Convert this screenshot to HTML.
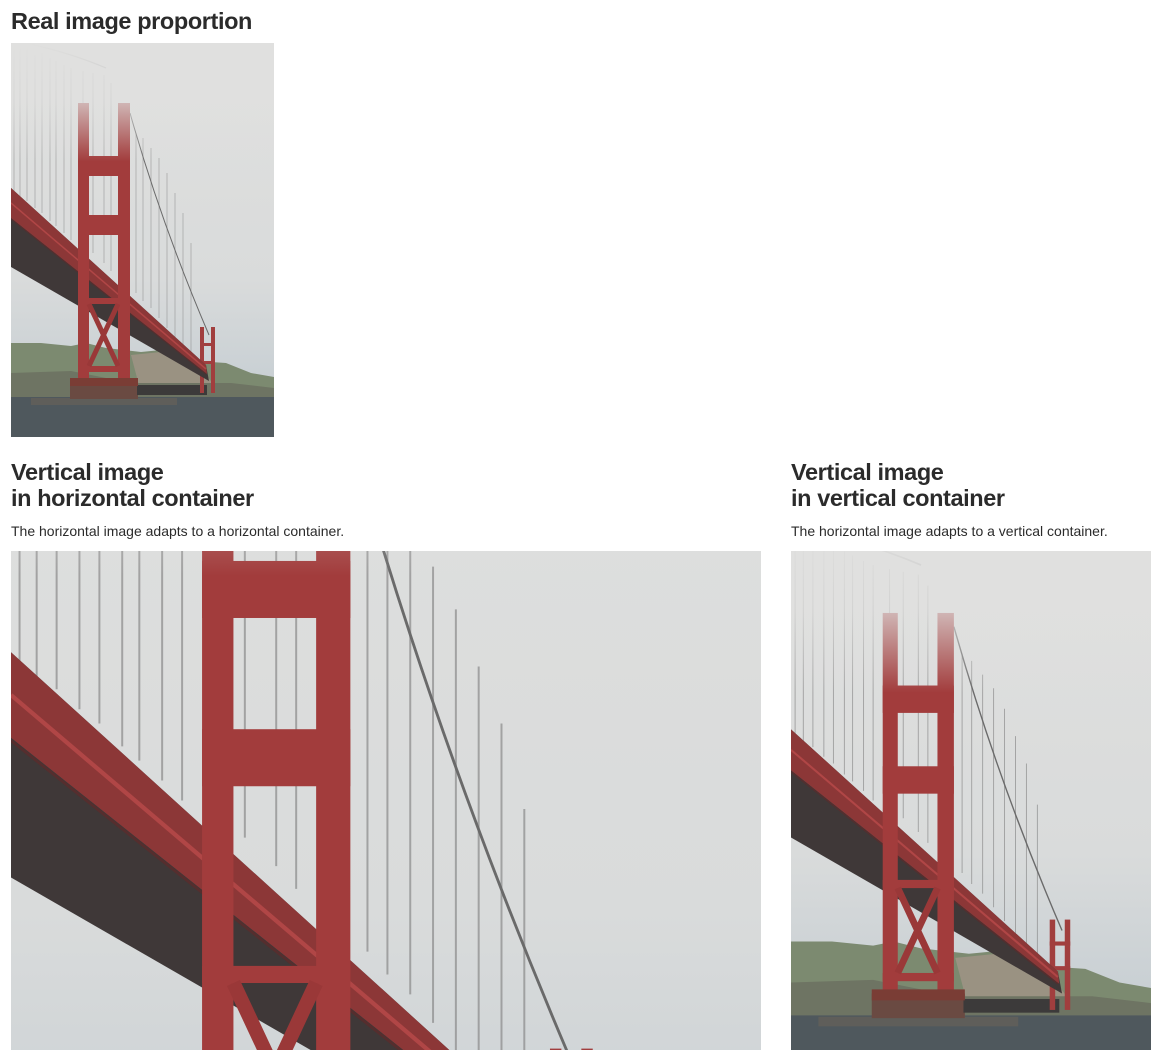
<!DOCTYPE html>
<html><head><meta charset="utf-8"><style>
html,body{margin:0;padding:0}
body{background:#fff;font-family:"Liberation Sans",Arial,sans-serif;color:#2b2b2b;width:1162px;height:1061px;overflow:hidden;position:relative}
h2{position:absolute;margin:0;font-size:23.5px;font-weight:bold;line-height:26px;letter-spacing:-0.4px}
p{position:absolute;margin:0;font-size:14px;line-height:16px}
svg.im{position:absolute;display:block}
</style></head><body>
<h2 style="left:11px;top:8px">Real image proportion</h2>
<svg class="im" style="left:11px;top:43px" width="263" height="394" viewBox="0 0 263 394" preserveAspectRatio="none">
<defs>
<linearGradient id="sky" x1="0" y1="0" x2="0" y2="1"><stop offset="0" stop-color="#e0e0df"/><stop offset="0.6" stop-color="#d9dbdb"/><stop offset="0.85" stop-color="#c9d0d4"/></linearGradient>
<linearGradient id="fog" x1="0" y1="0" x2="0" y2="1"><stop offset="0" stop-color="#e0e0df" stop-opacity="1"/><stop offset="0.15" stop-color="#e0e0df" stop-opacity="0.75"/><stop offset="0.3" stop-color="#e0e0df" stop-opacity="0"/></linearGradient>
<g id="B">
<rect width="263" height="394" fill="url(#sky)"/>
<g stroke="#8a8a8a" stroke-width="0.7" opacity="0.7">
<path d="M3 0V150M9 5V155M16 2V158M24 12V165M31 10V170M39 15V178M45 18V183M53 22V190M60 25V197M72 28V200M82 30V210M93 32V220M100 40V228M125 90V250M132 95V258M140 105V265M148 115V275M156 130V285M164 150V295M172 170V305M180 200V315"/>
</g>
<path d="M15 0 Q60 10 95 25" stroke="#777" stroke-width="1.2" fill="none"/>
<path d="M119 70 Q150 180 198 292" stroke="#6a6a6a" stroke-width="1" fill="none"/>
<path d="M0 300 L30 300 L60 303 L75 300 L95 305 L130 309 L160 306 L185 318 L215 320 L240 330 L263 334 V358 H0Z" fill="#7c8a70"/>
<path d="M120 312 L160 308 L185 318 L205 345 L130 350Z" fill="#9a9282"/>
<path d="M0 330 L60 328 L120 340 L220 340 L263 345 V358 H0Z" fill="#6e7463"/>
<rect y="354" width="263" height="40" fill="#4f585d"/>
<rect x="20" y="355" width="146" height="7" fill="#5f5e5a"/>
<rect x="59" y="338" width="68" height="18" fill="#6a4a42"/>
<rect x="126" y="342" width="70" height="10" fill="#3c3a3a"/>
<g fill="#a13e3e">
<rect x="189" y="284" width="4" height="66"/><rect x="200" y="284" width="4" height="66"/>
<rect x="189" y="300" width="15" height="3"/><rect x="189" y="318" width="15" height="3"/>
</g>
<path d="M0 145 L195 322 L198 338 L0 224Z" fill="#3f3838"/>
<path d="M0 145 L195 322 L196 331 L0 175Z" fill="#8c3737"/>
<path d="M0 160 L195 326" stroke="#b04646" stroke-width="1.5"/>
<path d="M0 176 L195 331" stroke="#552e2e" stroke-width="1"/>
<g fill="#a23c3c">
<rect x="67" y="60" width="11" height="282"/>
<rect x="107" y="60" width="12" height="282"/>
<rect x="67" y="113" width="52" height="20"/>
<rect x="67" y="172" width="52" height="20"/>
<rect x="67" y="255" width="52" height="6"/>
<rect x="67" y="323" width="52" height="6"/>
</g>
<path d="M78 261 L107 323 M107 261 L78 323" stroke="#9a3838" stroke-width="5"/>
<rect x="59" y="335" width="68" height="8" fill="#7a3d35"/>
<rect width="263" height="394" fill="url(#fog)"/>
</g>
</defs>
<use href="#B"/>
</svg>

<h2 style="left:11px;top:459px">Vertical image<br>in horizontal container</h2>
<p style="left:11px;top:523px">The horizontal image adapts to a horizontal container.</p>
<svg class="im" style="left:11px;top:551px" width="750" height="499" viewBox="0 0 263 394" preserveAspectRatio="xMidYMid slice"><use href="#B"/></svg>

<h2 style="left:791px;top:459px">Vertical image<br>in vertical container</h2>
<p style="left:791px;top:523px">The horizontal image adapts to a vertical container.</p>
<svg class="im" style="left:791px;top:551px" width="360" height="499" viewBox="0 0 263 394" preserveAspectRatio="xMidYMid slice"><use href="#B"/></svg>
</body></html>
